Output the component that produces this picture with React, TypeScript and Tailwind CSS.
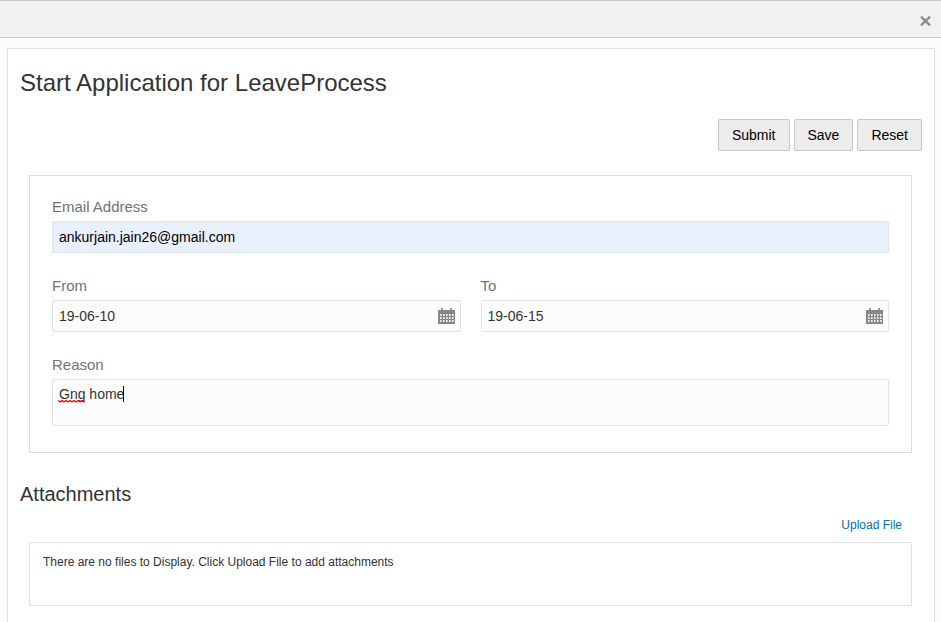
import { useState } from "react";

const fieldClass =
    "block w-full rounded-[2px] border border-[#dfe4e7] bg-[#fcfcfc] px-[6px] text-sm text-[#333333] outline-none";
const labelClass = "mb-1 block text-[15px] leading-5 text-[#737373]";

function CalendarIcon() {
    return (
        <svg
            className="h-4 w-[17px]"
            viewBox="0 0 17 16"
            fill="#85888a"
            aria-hidden="true"
        >
            <path fillOpacity=".85" d="M3 0h2v2H3zM12 0h2v2h-2z" />
            <path d="M0 2h17v14H0z" />
            <path
                fill="#fcfcfc"
                fillOpacity=".9"
                d="M2 6h1.6v2H2zM5 6h1.6v2H5zM8 6h1.6v2H8zM11 6h1.6v2H11zM14 6h1.6v2H14zM2 9h1.6v2H2zM5 9h1.6v2H5zM8 9h1.6v2H8zM11 9h1.6v2H11zM14 9h1.6v2H14zM2 12h1.6v2H2zM5 12h1.6v2H5zM8 12h1.6v2H8zM11 12h1.6v2H11zM14 12h1.6v2H14z"
            />
        </svg>
    );
}

interface DateFieldProps {
    id: string;
    label: string;
    value: string;
    onChange: (value: string) => void;
}

function DateField({ id, label, value, onChange }: DateFieldProps) {
    return (
        <div>
            <label className={labelClass} htmlFor={id}>
                {label}
            </label>
            <div className="relative">
                <input
                    type="text"
                    id={id}
                    className={`${fieldClass} h-8`}
                    value={value}
                    onChange={(e) => onChange(e.target.value)}
                />
                <button
                    type="button"
                    className="absolute inset-y-0 right-[6px] flex items-center"
                    aria-label={`Select date: ${label}`}
                >
                    <CalendarIcon />
                </button>
            </div>
        </div>
    );
}

export default function App() {
    const initial = {
        email: "ankurjain.jain26@gmail.com",
        from: "19-06-10",
        to: "19-06-15",
        reason: "Gng home",
    };
    const [data, setData] = useState(initial);
    const buttonClass =
        "h-8 rounded-[2px] border border-[#c4c8cb] bg-[#ececec] px-[13px] text-sm text-black";

    return (
        <div className="flex min-h-screen flex-col bg-[#fcfcfc] font-['Liberation_Sans',Arial,sans-serif] text-[#333333]">
            <header className="flex h-[38px] items-center justify-end border-y border-[#c8c8c8] bg-[#f1f1f1] px-[10px]">
                <button type="button" aria-label="Close" className="mt-1">
                    <svg
                        className="h-[10px] w-[11px]"
                        viewBox="0 0 11 10"
                        stroke="#878a8c"
                        strokeWidth="2.4"
                        aria-hidden="true"
                    >
                        <path d="M1 .7l9 8.6M10 .7l-9 8.6" />
                    </svg>
                </button>
            </header>
            <main className="ml-[7px] mr-[6px] mt-[10px] flex-1 border border-b-0 border-[#dfe1e3] bg-white px-3 pt-[18px] pb-4">
                <h1 className="text-2xl">Start Application for LeaveProcess</h1>
                <form onSubmit={(e) => e.preventDefault()}>
                    <div className="mt-5 flex justify-end gap-1">
                        <button type="submit" className={buttonClass}>
                            Submit
                        </button>
                        <button type="button" className={buttonClass}>
                            Save
                        </button>
                        <button
                            type="button"
                            className={buttonClass}
                            onClick={() => setData(initial)}
                        >
                            Reset
                        </button>
                    </div>
                    <div className="ml-[9px] mr-[10px] mt-6 flex flex-col gap-[23px] border border-[#d6dfe6] px-[22px] pt-[21px] pb-[26px]">
                        <div>
                            <label className={labelClass} htmlFor="email">
                                Email Address
                            </label>
                            <input
                                type="email"
                                id="email"
                                className="block h-8 w-full rounded-[2px] border border-[#dfe4e7] bg-[#e8f0fe] px-[6px] text-sm text-black outline-none"
                                value={data.email}
                                onChange={(e) =>
                                    setData({ ...data, email: e.target.value })
                                }
                            />
                        </div>
                        <div className="grid grid-cols-2 gap-5">
                            <DateField
                                id="from"
                                label="From"
                                value={data.from}
                                onChange={(from) => setData({ ...data, from })}
                            />
                            <DateField
                                id="to"
                                label="To"
                                value={data.to}
                                onChange={(to) => setData({ ...data, to })}
                            />
                        </div>
                        <div>
                            <label className={labelClass} htmlFor="reason">
                                Reason
                            </label>
                            <div className="relative">
                                <textarea
                                    id="reason"
                                    className={`${fieldClass} h-[47px] resize-none py-1`}
                                    value={data.reason}
                                    onChange={(e) =>
                                        setData({
                                            ...data,
                                            reason: e.target.value,
                                        })
                                    }
                                />
                                {data.reason === initial.reason && (
                                    <>
                                        {/* spelling mark under the first word */}
                                        <svg
                                            className="pointer-events-none absolute left-[6px] top-[21px] h-[3px] w-[27px]"
                                            viewBox="0 0 27 3"
                                            fill="none"
                                            stroke="#f00"
                                            strokeWidth="1.3"
                                            aria-hidden="true"
                                        >
                                            <path d="M0 .5l2 1.5 2-1.5 2 1.5 2-1.5 2 1.5 2-1.5 2 1.5 2-1.5 2 1.5 2-1.5 2 1.5 2-1.5 2 1.5 1-1" />
                                        </svg>
                                        <span className="pointer-events-none absolute left-[71px] top-[7px] h-4 w-px bg-black" />
                                    </>
                                )}
                            </div>
                        </div>
                    </div>
                </form>
                <section>
                    <h2 className="mt-[27px] text-xl">Attachments</h2>
                    <div className="ml-[9px] mr-[10px] mt-[7px] flex justify-end pr-[10px]">
                        <a
                            href="#upload"
                            className="text-xs leading-5 text-[#0572a8]"
                        >
                            Upload File
                        </a>
                    </div>
                    <div className="ml-[9px] mr-[10px] mt-[7px] h-16 border border-[#dfe1e3] px-[13px] py-[11px]">
                        <p className="text-xs">
                            There are no files to Display. Click Upload File to
                            add attachments
                        </p>
                    </div>
                </section>
            </main>
        </div>
    );
}
